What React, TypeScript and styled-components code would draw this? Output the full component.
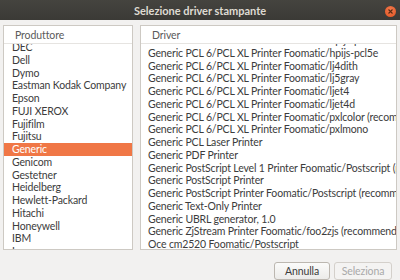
import React, { useLayoutEffect, useRef } from "react";
import styled, { createGlobalStyle } from "styled-components";

const Global = createGlobalStyle`
  html, body { margin: 0; padding: 0; background: #f2f1f0; }
  body { font-family: "Lato", "Open Sans", sans-serif; }
`;

const Window = styled.div`
  width: 400px;
  height: 280px;
  display: flex;
  flex-direction: column;
  background: #f2f1f0;
  overflow: hidden;
`;

const TitleBar = styled.div`
  height: 20px;
  flex: none;
  background: linear-gradient(#45443f, #3b3a36);
  display: flex;
  align-items: center;
  justify-content: center;
  position: relative;
  color: #dfdbd2;
  font-weight: bold;
  font-size: 11px;
  letter-spacing: 0;
`;

const CloseBtn = styled.div`
  position: absolute;
  right: 4px;
  top: 6px;
  width: 11px;
  height: 11px;
  border-radius: 50%;
  background: radial-gradient(circle at 50% 35%, #f27b50, #e2531f);
  display: flex;
  align-items: center;
  justify-content: center;
`;

const Body = styled.div`
  flex: 1;
  display: flex;
  flex-direction: column;
  padding: 5px 3px 0 3px;
`;

const Panels = styled.div`
  display: grid;
  grid-template-columns: 130px 257px;
  column-gap: 7px;
  height: 225px;
`;

const Panel = styled.div`
  border: 1px solid #cdc9c3;
  background: #ffffff;
  display: flex;
  flex-direction: column;
  overflow: hidden;
`;

const Header = styled.div<{ $pad: number }>`
  height: 17px;
  flex: none;
  border-bottom: 1px solid #e6e4e1;
  display: flex;
  align-items: center;
  padding-left: ${(p) => p.$pad}px;
  font-size: 10.5px;
  letter-spacing: -0.1px;
  color: #5a5a5a;
`;

const List = styled.div`
  flex: 1;
  overflow: hidden;
`;

const Row = styled.div<{ $selected?: boolean; $pad: number }>`
  height: 12.75px;
  line-height: 12.75px;
  padding-left: ${(p) => p.$pad}px;
  font-size: 10.5px;
  letter-spacing: -0.15px;
  white-space: nowrap;
  color: ${(p) => (p.$selected ? "#ffffff" : "#3c3c3c")};
  background: ${(p) => (p.$selected ? "#f07746" : "transparent")};
`;

const Footer = styled.div`
  display: flex;
  justify-content: flex-end;
  gap: 4px;
  padding: 12px 5px 0 0;
`;

const Button = styled.div<{ $disabled?: boolean; $w: number }>`
  width: ${(p) => p.$w}px;
  height: 18px;
  box-sizing: border-box;
  border: 1px solid ${(p) => (p.$disabled ? "#d4d0cb" : "#bcb7b0")};
  border-radius: 3px;
  background: ${(p) => (p.$disabled ? "#f4f3f2" : "linear-gradient(#fbfbfa, #ecebe9)")};
  color: ${(p) => (p.$disabled ? "#a9a9a9" : "#3c3c3c")};
  font-size: 10.5px;
  letter-spacing: -0.1px;
  display: flex;
  align-items: center;
  justify-content: center;
`;

const makers = [
  "DEC", "Dell", "Dymo", "Eastman Kodak Company", "Epson", "FUJI XEROX", "Fujifilm", "Fujitsu",
  "Generic", "Genicom", "Gestetner", "Heidelberg", "Hewlett-Packard", "Hitachi", "Honeywell", "IBM", "Imagen", "Infotec",
];

const drivers = [
  "Generic PCL 6/PCL XL Printer Foomatic/hpijs-pcl5c",
  "Generic PCL 6/PCL XL Printer Foomatic/hpijs-pcl5e",
  "Generic PCL 6/PCL XL Printer Foomatic/lj4dith",
  "Generic PCL 6/PCL XL Printer Foomatic/lj5gray",
  "Generic PCL 6/PCL XL Printer Foomatic/ljet4",
  "Generic PCL 6/PCL XL Printer Foomatic/ljet4d",
  "Generic PCL 6/PCL XL Printer Foomatic/pxlcolor (recommended)",
  "Generic PCL 6/PCL XL Printer Foomatic/pxlmono",
  "Generic PCL Laser Printer",
  "Generic PDF Printer",
  "Generic PostScript Level 1 Printer Foomatic/Postscript (recommended)",
  "Generic PostScript Printer",
  "Generic PostScript Printer Foomatic/Postscript (recommended)",
  "Generic Text-Only Printer",
  "Generic UBRL generator, 1.0",
  "Generic ZjStream Printer Foomatic/foo2zjs (recommended)",
  "Oce cm2520 Foomatic/Postscript",
  "Oki C5700",
];

function ScrolledList({ offset, children }: { offset: number; children: React.ReactNode }) {
  const ref = useRef<HTMLDivElement>(null);
  useLayoutEffect(() => {
    if (ref.current) ref.current.scrollTop = offset;
  }, [offset]);
  return <List ref={ref}>{children}</List>;
}

export default function App() {
  return (
    <>
      <Global />
      <Window>
        <TitleBar>
          Selezione driver stampante
          <CloseBtn>
            <svg width="5" height="5" viewBox="0 0 5 5">
              <path d="M0.5 0.5L4.5 4.5M4.5 0.5L0.5 4.5" stroke="#5a2a12" strokeWidth="1.1" />
            </svg>
          </CloseBtn>
        </TitleBar>
        <Body>
          <Panels>
            <Panel>
              <Header $pad={11}>Produttore</Header>
              <ScrolledList offset={3}>
                {makers.map((m) => (
                  <Row key={m} $pad={8} $selected={m === "Generic"}>
                    {m}
                  </Row>
                ))}
              </ScrolledList>
            </Panel>
            <Panel>
              <Header $pad={11}>Driver</Header>
              <ScrolledList offset={10}>
                {drivers.map((d) => (
                  <Row key={d} $pad={7}>
                    {d}
                  </Row>
                ))}
              </ScrolledList>
            </Panel>
          </Panels>
          <Footer>
            <Button $w={56}>Annulla</Button>
            <Button $w={58} $disabled>
              Seleziona
            </Button>
          </Footer>
        </Body>
      </Window>
    </>
  );
}
